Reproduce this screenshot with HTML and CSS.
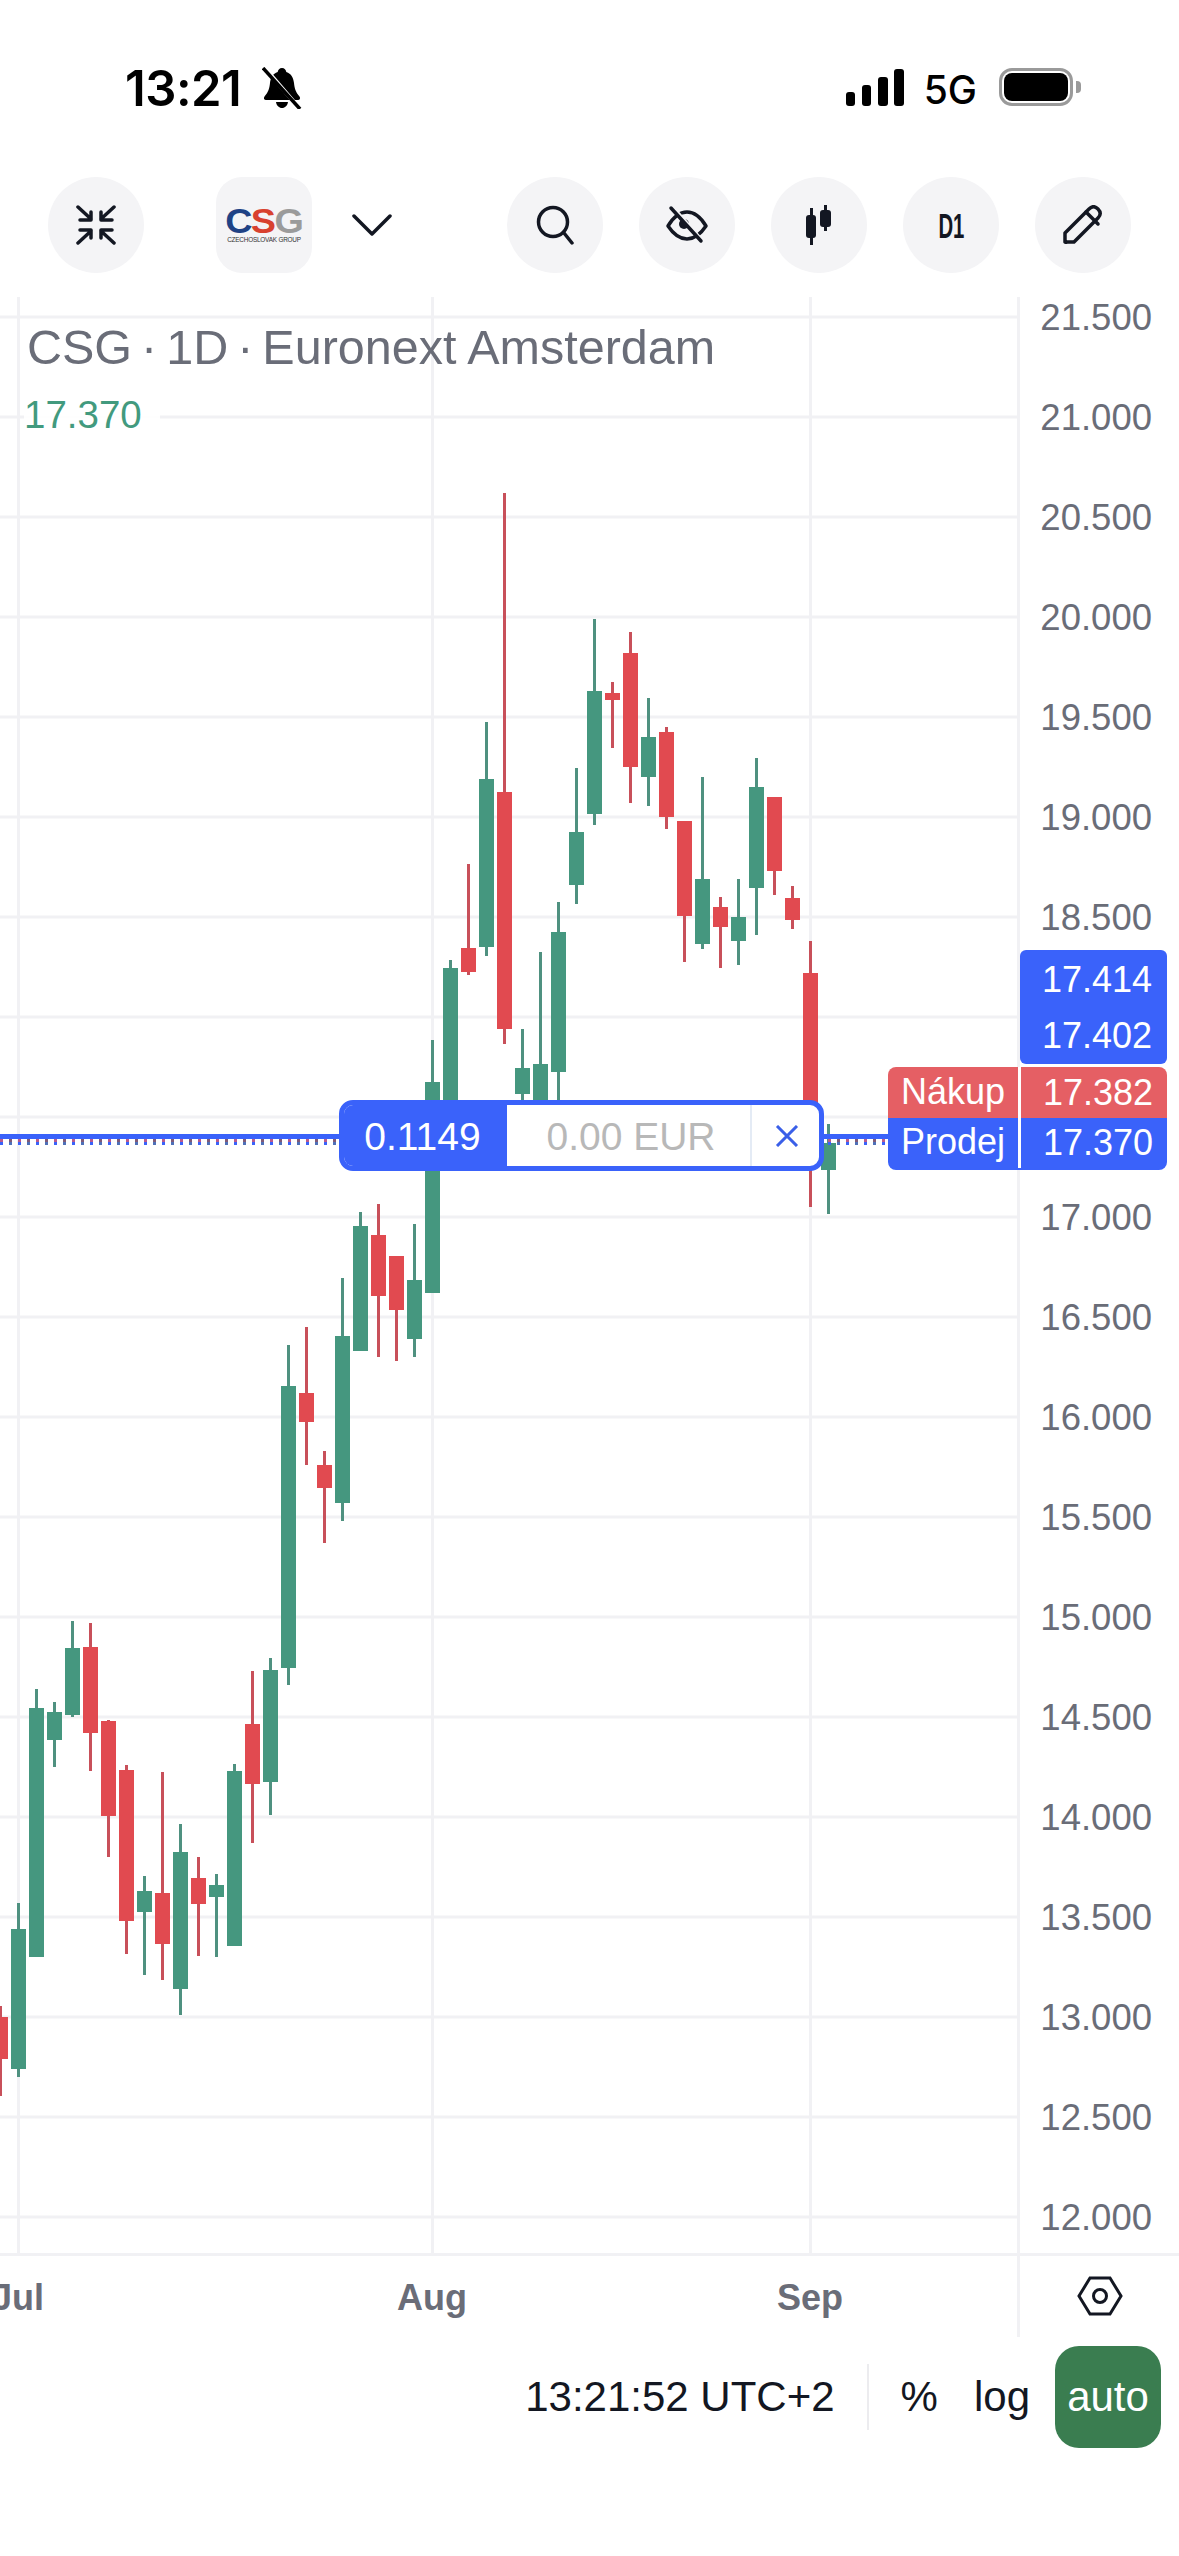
FILE: index.html
```html
<!DOCTYPE html>
<html lang="cs">
<head>
<meta charset="utf-8">
<title>CSG chart</title>
<link rel="stylesheet" href="styles.css">
</head>
<body>
<div class="page">
  <header class="status">
    <div class="status-left">
      <span class="clock">13:21</span>
      <svg class="bell" viewBox="0 0 40 42" width="40" height="42"><path d="M20 1c2.500 0 4 1.800 4.300 4 5 1.500 7.200 6 7.700 11 .5 5 1.500 9 5.500 13.500 1.200 1.500.5 3.500-1.500 3.500H4c-2 0-2.700-2-1.500-3.500C6.500 25 7.500 21 8 16c.5-5 2.700-9.500 7.700-11C16 2.800 17.500 1 20 1z"/><path d="M14 35h12c-.5 3.500-3 6-6 6s-5.500-2.500-6-6z"/><path class="bell-gap" d="M2 0l36 42"/><path class="bell-slash" d="M1 1l37 41"/></svg>
    </div>
    <div class="status-right">
      <div class="signal"><i class="b1"></i><i class="b2"></i><i class="b3"></i><i class="b4"></i></div>
      <span class="net">5G</span>
      <div class="battery"><div class="battery-body"><div class="battery-fill"></div></div><div class="battery-cap"></div></div>
    </div>
  </header>

  <nav class="toolbar">
    <div class="tool-left">
      <button class="round">
        <svg class="ico" viewBox="0 0 40 40" width="40" height="40"><path d="M2 2l13 12M15 7v8H4M38 2L25 14M25 7v8h11M2 38l13-12M4 25h11v8M38 38L25 26M36 25H25v8"/></svg>
      </button>
      <div class="logo-wrap">
        <div class="logo">
          <div class="logo-mark"><span class="l-c">C</span><span class="l-s">S</span><span class="l-g">G</span></div>
          <div class="logo-sub">CZECHOSLOVAK GROUP</div>
        </div>
        <svg class="ico chev" viewBox="0 0 40 22" width="40" height="22"><path d="M2 2l18 18L38 2"/></svg>
      </div>
    </div>
    <div class="tool-right">
      <button class="round">
        <svg class="ico" viewBox="0 0 40 40" width="40" height="40"><circle cx="18" cy="17" r="14.500"/><path d="M29 28l8 10"/></svg>
      </button>
      <button class="round">
        <svg class="ico" viewBox="0 0 44 40" width="44" height="40"><path d="M3 21C9 11 15 7 22 7s13 4 19 14c-6 9-12 13-19 13S9 30 3 21z"/><circle class="ico-fill" cx="19" cy="19" r="5"/><path class="ico-knock" d="M8 2l29 33"/><path d="M6 3l30 33"/></svg>
      </button>
      <button class="round">
        <svg class="ico-solid" viewBox="0 0 28 40" width="28" height="40"><rect x="3" y="4" width="3" height="38" transform="translate(2 -1)"/><rect x="1" y="10" width="10" height="23" rx="3"/><rect x="19" y="0" width="3" height="26"/><rect x="15" y="5" width="11" height="17" rx="3"/></svg>
      </button>
      <button class="round"><span class="d1">D1</span></button>
      <button class="round">
        <svg class="ico" viewBox="0 0 40 40" width="40" height="40"><path d="M2 37V28L26 4c3-3 6-3 9 0s3 6 0 9L11 37H4a2 2 0 0 1-2 0z"/><path d="M23 7l12 12" /></svg>
      </button>
    </div>
  </nav>

  <main class="chart">
    <div class="chart-row">
      <svg class="plot" viewBox="0 297 1019 1957" width="1019" height="1957">
        <path class="grid" d="M0 317H1019M0 417H1019M0 517H1019M0 617H1019M0 717H1019M0 817H1019M0 917H1019M0 1017H1019M0 1117H1019M0 1217H1019M0 1317H1019M0 1417H1019M0 1517H1019M0 1617H1019M0 1717H1019M0 1817H1019M0 1917H1019M0 2017H1019M0 2117H1019M0 2217H1019M18.500 297V2254M432.500 297V2254M810.500 297V2254"/>
        <path class="wick up" d="M18.500 1903V2077M36.500 1689V1708M54.500 1702V1767M72.500 1621V1717M144.500 1876V1975M180.500 1824V2015M216.500 1874V1957M234.500 1764V1771M270.500 1658V1815M288.500 1345V1685M342.500 1278V1521M360.500 1212V1226M414.500 1224V1357M432.500 1040V1082M450.500 960V968M486.500 722V956M522.500 1029V1120M540.500 952V1064M558.500 902V1120M576.500 768V904M594.500 619V825M648.500 698V806M702.500 777V949M738.500 879V965M756.500 758V935M828.500 1124V1214"/>
        <path class="wick down" d="M0.500 2006V2096M90.500 1623V1771M108.500 1720V1857M126.500 1765V1954M162.500 1772V1980M198.500 1857V1956M252.500 1671V1843M306.500 1327V1465M324.500 1451V1543M378.500 1204V1357M396.500 1256V1361M468.500 864V975M504.500 493V1044M612.500 682V748M630.500 632V803M666.500 727V829M684.500 821V962M720.500 897V968M774.500 797V895M792.500 886V929M810.500 941V1207"/>
        <path class="body up" d="M18.500 1929V2069M36.500 1708V1957M54.500 1712V1740M72.500 1648V1715M144.500 1891V1912M180.500 1852V1989M216.500 1885V1897M234.500 1771V1946M270.500 1670V1782M288.500 1386V1668M342.500 1336V1503M360.500 1226V1351M414.500 1280V1339M432.500 1082V1293M450.500 968V1120M486.500 779V947M522.500 1068V1094M540.500 1064V1120M558.500 932V1072M576.500 832V885M594.500 691V814M648.500 737V777M702.500 879V944M738.500 917V941M756.500 787V888M828.500 1143V1170"/>
        <path class="body down" d="M0.500 2017V2059M90.500 1647V1733M108.500 1721V1816M126.500 1770V1921M162.500 1893V1944M198.500 1878V1904M252.500 1724V1784M306.500 1393V1422M324.500 1465V1488M378.500 1235V1296M396.500 1256V1310M468.500 948V972M504.500 792V1029M612.500 693V700M630.500 653V767M666.500 732V817M684.500 821V916M720.500 907V927M774.500 797V871M792.500 898V920M810.500 973V1120"/>
      </svg>
      <div class="prices">
        <span>21.500</span><span>21.000</span><span>20.500</span><span>20.000</span><span>19.500</span><span>19.000</span><span>18.500</span><span></span><span></span><span>17.000</span><span>16.500</span><span>16.000</span><span>15.500</span><span>15.000</span><span>14.500</span><span>14.000</span><span>13.500</span><span>13.000</span><span>12.500</span><span>12.000</span>
      </div>
    </div>
    <div class="time-axis">
      <span class="month m-jul">Jul</span>
      <span class="month m-aug">Aug</span>
      <span class="month m-sep">Sep</span>
      <div class="axis-corner">
        <svg class="hex" viewBox="0 0 46 40" width="46" height="40"><path d="M13 2h20l11 18-11 18H13L2 20z"/><circle cx="23" cy="20" r="6.500"/></svg>
      </div>
    </div>

    <div class="legend">CSG · 1D · <span class="legend-venue">Euronext Amsterdam</span></div>
    <div class="legend-price">17.370</div>

    <div class="tag tag-a"><span class="tag-val">17.414</span></div>
    <div class="tag tag-b"><span class="tag-val">17.402</span></div>
    <div class="price-line"></div>
    <div class="tag tag-buy"><span class="tag-name">Nákup</span><span class="tag-val">17.382</span></div>
    <div class="tag tag-sell"><span class="tag-name">Prodej</span><span class="tag-val">17.370</span></div>

    <div class="ticket">
      <span class="ticket-qty">0.1149</span>
      <span class="ticket-amount">0.00 EUR</span>
      <span class="ticket-close"><svg viewBox="0 0 24 22" width="24" height="22"><path d="M2 1l20 20M22 1L2 21"/></svg></span>
    </div>
  </main>

  <footer class="bottom">
    <span class="time">13:21:52 UTC+2</span>
    <span class="sep"></span>
    <span class="opt opt-pct">%</span>
    <span class="opt opt-log">log</span>
    <span class="auto">auto</span>
  </footer>
</div>
</body>
</html>
```
FILE: styles.css
```css
* { box-sizing: border-box; margin: 0; padding: 0; }
html, body { background: #fff; }
body { font-family: "Liberation Sans", Arial, sans-serif; overflow: hidden; }
.page { width: 1179px; height: 2556px; overflow: hidden; position: relative; }

/* status bar */
.status { height: 177px; display: flex; justify-content: space-between; align-items: flex-start; padding: 60px 98px 0 125px; }
.status-left { display: flex; align-items: flex-start; gap: 21px; }
.clock { font: 600 49px/58px Inter, sans-serif; color: #000; letter-spacing: -.5px; }
.bell { margin-top: 7px; fill: #000; }
.bell-gap { stroke: #fff; stroke-width: 4; fill: none; }
.bell-slash { stroke: #000; stroke-width: 3.500; fill: none; }
.status-right { display: flex; align-items: flex-start; }
.signal { width: 58px; height: 37px; margin-top: 9px; display: flex; align-items: flex-end; justify-content: space-between; }
.signal i { width: 9.500px; background: #000; border-radius: 3px; display: block; }
.b1 { height: 14px; } .b2 { height: 21px; } .b3 { height: 29px; } .b4 { height: 37px; }
.net { font: 500 39px/46px Inter, sans-serif; color: #000; margin-left: 20px; margin-top: 7px; }
.battery { display: flex; align-items: center; margin-left: 22px; margin-top: 8px; }
.battery-body { width: 74px; height: 38px; border: 3px solid #9a9a9a; border-radius: 13px; padding: 2px; }
.battery-fill { width: 100%; height: 100%; background: #000; border-radius: 8px; }
.battery-cap { width: 5px; height: 12px; margin-left: 3px; background: #9a9a9a; border-radius: 0 4px 4px 0; }

/* toolbar */
.toolbar { height: 96px; padding: 0 48px; display: flex; justify-content: space-between; }
.tool-left { display: flex; gap: 72px; }
.tool-right { display: flex; gap: 36px; }
.round { width: 96px; height: 96px; border: 0; border-radius: 50%; background: #f4f4f6; display: flex; align-items: center; justify-content: center; }
.ico { fill: none; stroke: #131722; stroke-width: 3.500; stroke-linecap: round; stroke-linejoin: round; }
.ico-fill { fill: #131722; stroke: none; }
.ico-knock { stroke: #f4f4f6; stroke-width: 3; }
.ico-solid { fill: #131722; }
.d1 { font: 700 35px/1 "Liberation Sans", sans-serif; color: #131722; display: block; transform: scaleX(.58); }
.logo-wrap { display: flex; align-items: center; gap: 40px; }
.logo { width: 96px; height: 96px; border-radius: 26px; background: #f4f4f6; display: flex; flex-direction: column; align-items: center; padding-top: 27px; }
.logo-mark { font: 700 35px/34px "Liberation Sans", sans-serif; letter-spacing: -1.500px; height: 34px; transform: scaleX(1.08); }
.l-c { color: #1f4285; } .l-s { color: #d8412f; } .l-g { color: #9b9b9b; }
.logo-sub { font: 400 6.400px/8px "Liberation Sans", sans-serif; color: #333; white-space: nowrap; letter-spacing: -.2px; margin-top: -2px; }
.chev { margin-top: 0; }

/* chart */
.chart { position: relative; margin-top: 24px; height: 2040px; }
.chart-row { display: flex; height: 1957px; }
.plot { display: block; flex: none; }
.grid { stroke: #f1f1f4; stroke-width: 3; fill: none; }
.wick { stroke-width: 3; fill: none; }
.body { stroke-width: 15; fill: none; }
.wick.up { stroke: #4f9180; }
.wick.down { stroke: #c8505a; }
.body.up { stroke: #45977f; }
.body.down { stroke: #e14a50; }
.prices { flex: 1; margin-top: -29px; height: 2000px; display: flex; flex-direction: column; align-items: flex-end; padding-right: 27px; position: relative; }
.prices::before { content: ""; position: absolute; left: -2px; top: 29px; width: 3px; height: 2040px; background: #f1f1f4; }
.prices span { height: 100px; flex: none; font-size: 36.500px; line-height: 100px; color: #6a6d78; }

.time-axis { position: relative; height: 83px; border-top: 3px solid #f1f1f4; margin-top: -1px; }
.month { position: absolute; top: 22px; transform: translateX(-50%); font-weight: 700; font-size: 36px; line-height: 40px; color: #6a6d78; }
.m-jul { left: 18px; } .m-aug { left: 432px; } .m-sep { left: 810px; }
.axis-corner { position: absolute; left: 1019px; right: 0; top: 0; bottom: 0; display: flex; justify-content: center; padding-top: 20px; padding-left: 1px; }
.hex { fill: none; stroke: #131722; stroke-width: 3; }

.legend { position: absolute; left: 27px; top: 27px; font-size: 48.500px; line-height: 47px; word-spacing: -4.500px; color: #6a6d78; white-space: nowrap; }
.legend-venue { word-spacing: 0; }
.legend-price { position: absolute; left: 24px; top: 99px; font-size: 38.500px; line-height: 38px; color: #429a7e; background: rgba(255,255,255,.9); padding-right: 18px; }

.tag { position: absolute; left: 888px; width: 279px; display: flex; color: #fff; font-size: 36px; align-items: center; }
.tag-name { width: 130px; padding-left: 13px; margin-top: -3px; }
.tag-val { width: 149px; padding-left: 22px; border-left: 3px solid #fff; height: 100%; display: flex; align-items: center; }
.tag-a, .tag-b { left: 1020px; width: 147px; background: #3a62fa; }
.tag-a .tag-val, .tag-b .tag-val { border-left: 0; padding-left: 22px; }
.tag-a { top: 653px; height: 58px; border-radius: 6px 6px 0 0; padding-top: 2px; }
.tag-b { top: 711px; height: 56px; border-radius: 0 0 6px 6px; }
.tag-buy { top: 770px; height: 52px; background: #e55f64; border-radius: 8px 8px 0 0; }
.tag-sell { top: 821px; height: 52px; background: #3a62fa; border-radius: 0 0 8px 8px; padding-bottom: 2px; }

.price-line { position: absolute; left: 0; top: 837px; width: 888px; height: 11px; border-top: 5px solid #3a62fa;
  background:
    repeating-linear-gradient(90deg, #b85a8e 0 3px, transparent 3px 9px, #805a78 9px 12px, transparent 12px 18px) 0 0 / 100% 3px no-repeat,
    repeating-linear-gradient(90deg, #3a62fa 0 3px, transparent 3px 9px, #4f70b8 9px 12px, transparent 12px 18px) 0 3px / 100% 3px no-repeat; }

.ticket { position: absolute; left: 339px; top: 803px; width: 485px; height: 71px; border: 5px solid #3a62fa; border-radius: 14px; background: #fff; display: flex; align-items: stretch; font-size: 39px; overflow: hidden; }
.ticket-qty { width: 163px; background: #3a62fa; color: #fff; display: flex; align-items: center; justify-content: center; padding-right: 6px; padding-top: 2px; }
.ticket-amount { width: 245px; color: #b8b8b8; display: flex; align-items: center; justify-content: center; padding-left: 5px; padding-top: 2px; border-right: 2px solid #e4ebf5; }
.ticket-close { flex: 1; display: flex; align-items: center; justify-content: center; padding-left: 3px; }
.ticket-close svg { fill: none; stroke: #3a5fe8; stroke-width: 3; }

/* bottom bar */
.bottom { margin-top: 9px; height: 102px; display: flex; align-items: center; padding-right: 18px; justify-content: flex-end; color: #131722; font-size: 42px; }
.time { margin-right: 32px; }
.sep { width: 2px; height: 66px; background: #ececef; margin-right: 32px; }
.opt-pct { margin-right: 36px; }
.opt-log { margin-right: 25px; }
.auto { width: 106px; height: 102px; border-radius: 24px; background: #3a7d50; color: #fff; display: flex; align-items: center; justify-content: center; }
```
